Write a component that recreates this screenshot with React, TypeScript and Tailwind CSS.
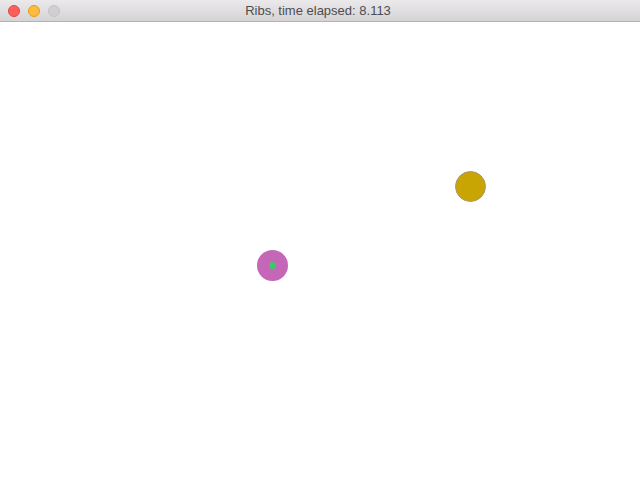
export default function App() {
  return (
    <div className="flex h-[502px] w-[640px] flex-col overflow-hidden bg-white">
      {/* Title bar */}
      <div className="relative flex h-[22px] shrink-0 items-center justify-center border-b border-[#b4b3b4] bg-gradient-to-b from-[#ebe9eb] to-[#d5d3d5]">
        <div className="absolute left-[8px] top-[5px] flex gap-[8px]">
          <span className="h-[12px] w-[12px] rounded-full border border-[#e2463f] bg-[#fc605c]" />
          <span className="h-[12px] w-[12px] rounded-full border border-[#e1a116] bg-[#fdbc40]" />
          <span className="h-[12px] w-[12px] rounded-full border border-[#c4c4c4] bg-[#d0d0d0]" />
        </div>
        <p className="pr-[4px] text-[13px] text-[#4d4d4d] [font-family:'Liberation_Sans',Arial,sans-serif]">
          Ribs, time elapsed: 8.113
        </p>
      </div>

      {/* Canvas */}
      <div className="relative flex-1">
        <div className="absolute left-[455px] top-[149px] h-[31px] w-[31px] rounded-full border border-[#a89a6a] bg-[#c9a503]" />
        <div className="absolute left-[257px] top-[228px] flex h-[31px] w-[31px] items-center justify-center rounded-full bg-[#c467b6]">
          <span className="h-[7px] w-[7px] rounded-full bg-[#3fc66c]" />
        </div>
      </div>
    </div>
  );
}
